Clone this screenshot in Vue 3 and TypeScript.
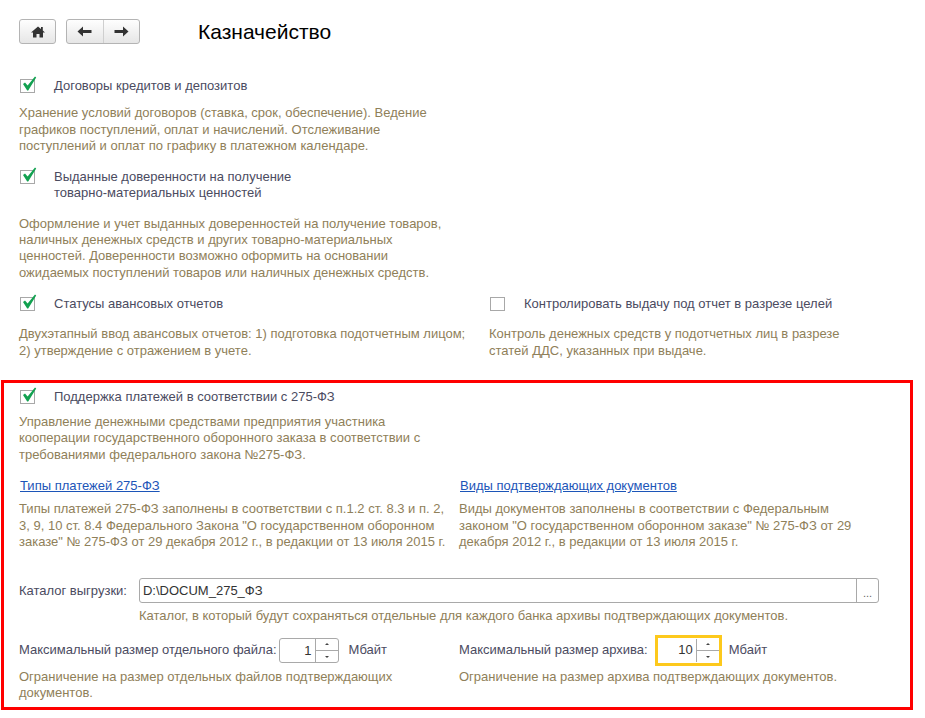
<script setup lang="ts">
interface Opt { label: string[]; desc: string[]; checked: boolean }
const first: Opt[] = [
  { label: ['Договоры кредитов и депозитов'], checked: true, desc: ['Хранение условий договоров (ставка, срок, обеспечение). Ведение', 'графиков поступлений, оплат и начислений. Отслеживание', 'поступлений и оплат по графику в платежном календаре.'] },
  { label: ['Выданные доверенности на получение', 'товарно-материальных ценностей'], checked: true, desc: ['Оформление и учет выданных доверенностей на получение товаров,', 'наличных денежных средств и других товарно-материальных', 'ценностей. Доверенности возможно оформить на основании', 'ожидаемых поступлений товаров или наличных денежных средств.'] },
]
const tick = 'M3 9 L5 7.6 L7.6 10.6 L15 1.5 L16.2 2.4 L8.2 15.6 L7.2 15.6 Z'
</script>

<template>
  <div class="page">
    <header class="top">
      <button class="btn home" type="button">
        <svg width="14" height="12" viewBox="0 0 14 12"><path d="M7 0.5 L10 3 L10 1 L11.8 1 L11.8 4.5 L14 6.5 L12 6.5 L12 11.5 L8.5 11.5 L8.5 8 L5.5 8 L5.5 11.5 L2 11.5 L2 6.5 L0 6.5 Z" fill="#333"/></svg>
      </button>
      <div class="btn nav">
        <span class="seg"><svg width="15" height="11" viewBox="0 0 15 11"><path d="M0.5 5.5 L6 0.5 L6 4 L14.5 4 L14.5 7 L6 7 L6 10.5 Z" fill="#333"/></svg></span>
        <span class="seg last"><svg width="15" height="11" viewBox="0 0 15 11"><path d="M14.5 5.5 L9 0.5 L9 4 L0.5 4 L0.5 7 L9 7 L9 10.5 Z" fill="#333"/></svg></span>
      </div>
      <h1 class="title">Казначейство</h1>
    </header>

    <section class="upper">
      <div v-for="o in first" :key="o.label[0]" class="opt">
        <div class="check-row">
          <span class="box"><svg class="tick" width="18" height="18" viewBox="0 0 18 18"><path :d="tick" fill="#12a150"/></svg></span>
          <span class="label"><template v-for="l in o.label" :key="l">{{ l }}<br></template></span>
        </div>
        <p class="desc"><template v-for="d in o.desc" :key="d">{{ d }}<br></template></p>
      </div>
      <div class="cols statuses">
        <div>
          <div class="check-row">
            <span class="box"><svg class="tick" width="18" height="18" viewBox="0 0 18 18"><path :d="tick" fill="#12a150"/></svg></span>
            <span class="label">Статусы авансовых отчетов</span>
          </div>
          <p class="desc">Двухэтапный ввод авансовых отчетов: 1) подготовка подотчетным лицом;<br>2) утверждение с отражением в учете.</p>
        </div>
        <div>
          <div class="check-row">
            <span class="box"></span>
            <span class="label">Контролировать выдачу под отчет в разрезе целей</span>
          </div>
          <p class="desc">Контроль денежных средств у подотчетных лиц в разрезе<br>статей ДДС, указанных при выдаче.</p>
        </div>
      </div>
    </section>

    <section class="red">
      <div class="check-row">
        <span class="box"><svg class="tick" width="18" height="18" viewBox="0 0 18 18"><path :d="tick" fill="#12a150"/></svg></span>
        <span class="label">Поддержка платежей в соответствии с 275-ФЗ</span>
      </div>
      <p class="desc intro">Управление денежными средствами предприятия участника<br>кооперации государственного оборонного заказа в соответствии с<br>требованиями федерального закона №275-ФЗ.</p>

      <div class="cols links">
        <div>
          <a class="link" href="#">Типы платежей 275-ФЗ</a>
          <p class="desc">Типы платежей 275-ФЗ заполнены в соответствии с п.1.2 ст. 8.3 и п. 2,<br>3, 9, 10 ст. 8.4 Федерального Закона "О государственном оборонном<br>заказе" № 275-ФЗ от 29 декабря 2012 г., в редакции от 13 июля 2015 г.</p>
        </div>
        <div>
          <a class="link" href="#">Виды подтверждающих документов</a>
          <p class="desc">Виды документов заполнены в соответствии с Федеральным<br>законом "О государственном оборонном заказе" № 275-ФЗ от 29<br>декабря 2012 г., в редакции от 13 июля 2015 г.</p>
        </div>
      </div>

      <div class="catalog">
        <span class="label">Каталог выгрузки:</span>
        <div class="path">
          <span class="path-val">D:\DOCUM_275_ФЗ</span>
          <span class="dots">...</span>
        </div>
      </div>
      <p class="desc catalog-note">Каталог, в который будут сохраняться отдельные для каждого банка архивы подтверждающих документов.</p>

      <div class="cols sizes">
        <div>
          <div class="size-row">
            <span class="label">Максимальный размер отдельного файла:</span>
            <div class="spin">
              <span class="val">1</span>
              <span class="arrows"><i class="up"></i><i class="down"></i></span>
            </div>
            <span class="label unit">Мбайт</span>
          </div>
          <p class="desc">Ограничение на размер отдельных файлов подтверждающих<br>документов.</p>
        </div>
        <div>
          <div class="size-row">
            <span class="label">Максимальный размер архива:</span>
            <div class="spin focus">
              <span class="val">10</span>
              <span class="arrows"><i class="up"></i><i class="down"></i></span>
            </div>
            <span class="label unit">Мбайт</span>
          </div>
          <p class="desc">Ограничение на размер архива подтверждающих документов.</p>
        </div>
      </div>
    </section>
  </div>
</template>

<style>
html, body { margin: 0; background: #fff; }
</style>

<style scoped>
.page { width: 925px; height: 718px; overflow: hidden; box-sizing: border-box; padding-top: 19px; font: 13px/16.3px "Liberation Sans", Arial, sans-serif; background: #fff; }
.top { display: flex; align-items: center; height: 25px; padding-left: 19px; }
.btn { box-sizing: border-box; height: 25px; border: 1px solid #b4b4b4; border-radius: 3px; background: linear-gradient(#fefefe, #e6e6e6); display: flex; align-items: center; justify-content: center; padding: 0; }
.home { width: 37px; }
.nav { width: 74px; margin-left: 10px; }
.seg { flex: 1; height: 100%; display: flex; align-items: center; justify-content: center; }
.seg.last { border-left: 1px solid #cfcfcf; }
.title { margin: 0 0 0 58px; font-size: 21px; font-weight: 400; color: #000; line-height: 25px; }
.upper { padding: 34px 0 0 19px; }
.opt { width: 440px; }
.check-row { display: flex; align-items: flex-start; min-height: 16px; }
.box { position: relative; flex: none; box-sizing: border-box; width: 15px; height: 14px; border: 1px solid #a8a8a8; margin: 1px 19px 0 1px; background: #fff; }
.tick { position: absolute; left: -1px; top: -5px; }
.label { color: #4b4b5f; }
.desc { margin: 0; color: #8f8059; }
.opt .desc { margin-top: 11px; margin-bottom: 15px; }
.opt + .opt .desc { margin-top: 14px; margin-bottom: 15px; }
.cols { display: grid; grid-template-columns: 470px 1fr; }
.statuses .desc { margin-top: 14px; }
.red { box-sizing: border-box; width: 912px; height: 330px; margin: 21px 0 0 1px; padding: 6px 0 0 15px; border: 3px solid #ff0000; }
.intro { margin-top: 9px; }
.links { margin-top: 15px; grid-template-columns: 440px 1fr; }
.link { color: #1c55b8; text-decoration: underline; margin-left: 1px; }
.links .desc { margin-top: 7px; }
.catalog { display: flex; align-items: center; margin-top: 28px; }
.path { box-sizing: border-box; display: flex; width: 740px; height: 25px; margin-left: 12px; border: 1px solid #a9a9a9; border-radius: 3px; color: #333; }
.path-val { flex: 1; padding-left: 3px; line-height: 23px; }
.dots { width: 21px; border-left: 1px solid #a9a9a9; text-align: center; line-height: 28px; font-size: 11px; color: #666; }
.catalog-note { margin: 5px 0 0 120px; }
.sizes { margin-top: 13px; grid-template-columns: 440px 1fr; }
.size-row { display: flex; align-items: center; height: 25px; }
.spin { box-sizing: border-box; position: relative; display: flex; flex: none; width: 60px; height: 25px; margin-left: 2px; border: 1px solid #a9a9a9; border-radius: 3px; }
.spin.focus { border: 3px solid #fdc91c; border-radius: 0; margin-left: 7px; width: 67px; height: 31px; margin-top: -3px; margin-bottom: -3px; }
.val { flex: 1; text-align: right; padding-right: 3px; line-height: 23px; color: #333; }
.arrows { position: relative; width: 22px; border-left: 1px solid #a9a9a9; }
.arrows::after { content: ""; position: absolute; left: 0; right: 0; top: 50%; height: 1px; background: #a9a9a9; }
.arrows i { position: absolute; left: 9px; width: 0; height: 0; border-left: 2px solid transparent; border-right: 2px solid transparent; }
.arrows .up { top: 4px; border-bottom: 2px solid #444; }
.arrows .down { bottom: 4px; border-top: 2px solid #444; }
.focus .arrows { margin: 1px 0; }
.unit { margin-left: 10px; }
.focus + .unit { margin-left: 7px; }
.sizes .desc { margin-top: 6px; }
</style>
